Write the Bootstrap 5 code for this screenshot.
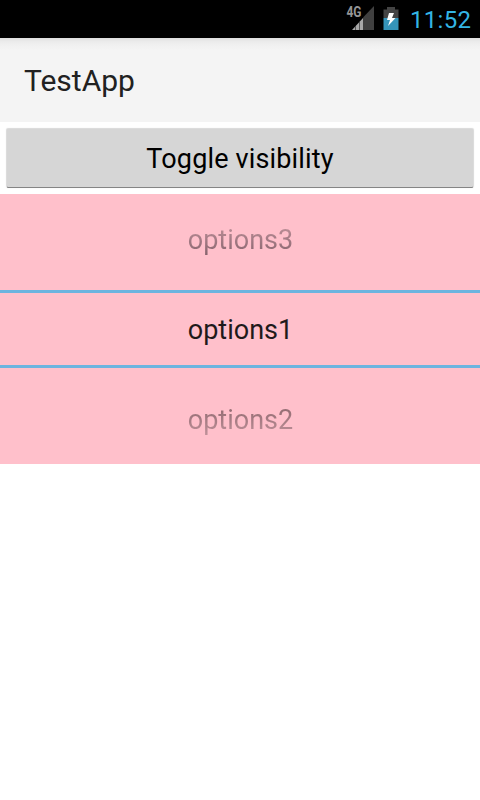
<!DOCTYPE html>
<html lang="en">
<head>
<meta charset="utf-8">
<meta name="viewport" content="width=device-width, initial-scale=1">
<title>TestApp</title>
<link href="https://cdn.jsdelivr.net/npm/bootstrap@5.3.0/dist/css/bootstrap.min.css" rel="stylesheet">
<style>
body { font-family: Roboto, sans-serif; background: #fff; min-height: 800px; }
.status-bar { height: 38px; background: #000; color: #33b5e5; padding-right: 9px; }
.status-clock { width: 61px; white-space: nowrap; font-size: 24px; line-height: 38px; letter-spacing: .3px; padding-top: 1px; }
.app-bar { height: 84px; padding: 1px 24px 0; background: linear-gradient(#dedede 0, #eaeaea 3px, #f0f0f0 7px, #f4f4f4 12px); }
.app-title { font-size: 30px; line-height: 36px; color: #212121; letter-spacing: 0; }
.btn-toggle, .btn-toggle:hover { height: 58px; padding: 0; font-size: 27px; line-height: 60px; letter-spacing: .15px; color: #000; background: #d6d6d6; border: 0; border-radius: 1px; box-shadow: 0 1px 0 #858585, 0 0 1px 1px #d9d9d9; }
.toggle-area { height: 72px; padding: 7px 7px 0; }
.picker { height: 270px; padding-left: 1px; background: #ffc0cb; font-size: 27px; line-height: 36px; color: #1f1a1b; }
.picker-side { height: 96px; }
.picker-current { height: 78px; margin-left: -1px; padding: 2px 0 0 1px; border-top: 3px solid #6cb4df; border-bottom: 3px solid #6cb4df; }
.fade-up, .fade-down { -webkit-background-clip: text; background-clip: text; color: transparent; }
.fade-up { background-image: linear-gradient(#c5959e, #82606a); }
.fade-down { background-image: linear-gradient(#886369, #c5959e); }
</style>
</head>
<body>
<header class="status-bar d-flex justify-content-end align-items-center">
<svg width="64" height="38" viewBox="346 0 64 38" aria-hidden="true">
<text x="346.5" y="17" font-family="Roboto, sans-serif" font-size="14" font-weight="700" fill="#969696" textLength="15" lengthAdjust="spacingAndGlyphs">4G</text>
<path d="M374 6V30H363V17.500Z" fill="#404040"/>
<path d="M352 30 363 18V30Z" fill="#a8a8a8"/>
<path d="M355.500 26V30M359.500 22V30" stroke="#555" stroke-width="1"/>
<path d="M387 7H395V9.500H398.500V18H383.500V9.500H387Z" fill="#444"/>
<path d="M383.500 18H398.500V30H383.500Z" fill="#3594b9"/>
<path d="M389 13H394L392 18H395.500L388 26L390 20H387Z" fill="#fff"/>
</svg>
<span class="status-clock">11:52</span>
</header>
<nav class="app-bar d-flex align-items-center"><h1 class="app-title fw-normal m-0">TestApp</h1></nav>
<main>
<div class="toggle-area"><button type="button" class="btn btn-toggle w-100 d-block">Toggle visibility</button></div>
<section class="picker d-flex flex-column text-center">
<div class="picker-side d-flex justify-content-center align-items-center pb-1"><span class="fade-up">options3</span></div>
<div class="picker-current d-flex justify-content-center align-items-center"><span>options1</span></div>
<div class="picker-side d-flex justify-content-center align-items-center pt-2"><span class="fade-down">options2</span></div>
</section>
</main>
<script src="https://cdn.jsdelivr.net/npm/bootstrap@5.3.0/dist/js/bootstrap.bundle.min.js"></script>
</body>
</html>
